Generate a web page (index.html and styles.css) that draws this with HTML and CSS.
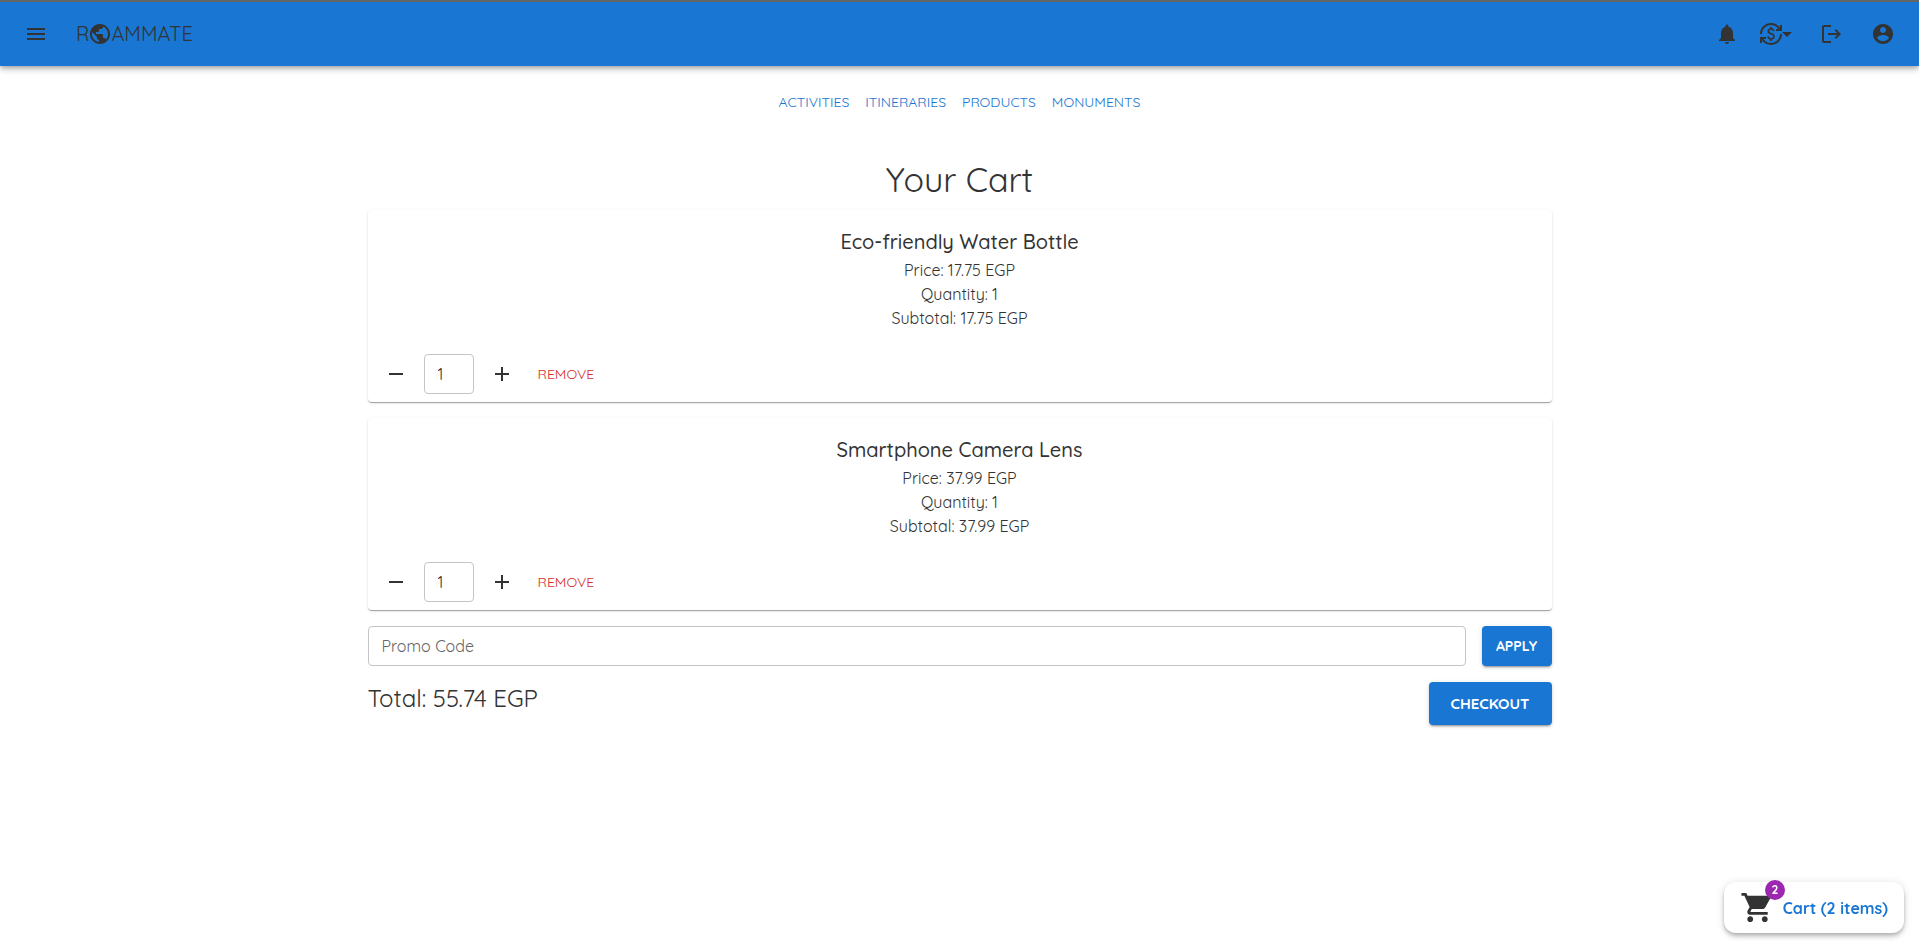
FILE: index.html
```html
<!DOCTYPE html>
<html lang="en">
<head>
<meta charset="utf-8">
<title>Roammate - Your Cart</title>
<link rel="stylesheet" href="styles.css">
</head>
<body>
<header class="app-bar">
  <button class="icon-button menu-button" aria-label="Menu"><svg class="icon" viewBox="0 0 24 24"><path d="M3 18h18v-2H3zm0-5h18v-2H3zm0-7v2h18V6z"/></svg></button>
  <a class="logo" href="#" aria-label="Roammate"><span>R</span><svg class="icon logo-globe" viewBox="0 0 24 24"><path d="M12 2C6.480 2 2 6.480 2 12s4.480 10 10 10 10-4.480 10-10S17.520 2 12 2m-1 17.930c-3.950-.49-7-3.850-7-7.930 0-.62.080-1.210.21-1.790L9 15v1c0 1.100.9 2 2 2zm6.900-2.540c-.26-.81-1-1.390-1.900-1.390h-1v-3c0-.55-.45-1-1-1H8v-2h2c.55 0 1-.45 1-1V7h2c1.100 0 2-.9 2-2v-.41c2.930 1.190 5 4.060 5 7.410 0 2.080-.8 3.970-2.100 5.390"/></svg><span>AMMATE</span></a>
  <div class="bar-actions">
    <button class="icon-button" aria-label="Notifications"><svg class="icon" viewBox="0 0 24 24"><path d="M12 22c1.100 0 2-.9 2-2h-4c0 1.100.89 2 2 2m6-6v-5c0-3.070-1.640-5.640-4.500-6.320V4c0-.83-.67-1.500-1.500-1.500s-1.500.67-1.500 1.500v.68C7.630 5.360 6 7.920 6 11v5l-2 2v1h16v-1z"/></svg></button>
    <button class="icon-button currency-button" aria-label="Currency"><svg class="icon" viewBox="0 0 24 24"><path d="M12.890 11.100c-1.780-.59-2.640-.96-2.640-1.900 0-1.020 1.110-1.390 1.810-1.390 1.310 0 1.790.99 1.900 1.340l1.580-.67c-.15-.44-.82-1.910-2.660-2.230V5h-1.750v1.260c-2.600.56-2.620 2.850-2.620 2.960 0 2.270 2.250 2.910 3.350 3.310 1.580.56 2.280 1.070 2.280 2.030 0 1.130-1.050 1.610-1.980 1.610-1.820 0-2.340-1.870-2.400-2.090l-1.660.67c.63 2.190 2.280 2.780 2.900 2.960V19h1.750v-1.240c.52-.09 3.020-.59 3.020-3.220.010-1.390-.6-2.610-2.880-3.440M3 21H1v-6h6v2H4.520c1.610 2.410 4.360 4 7.480 4 4.970 0 9-4.030 9-9h2c0 6.080-4.920 11-11 11-3.720 0-7.010-1.850-9-4.670zm-2-9C1 5.920 5.920 1 12 1c3.720 0 7.010 1.850 9 4.670V3h2v6h-6V7h2.480C17.870 4.590 15.120 3 12 3c-4.970 0-9 4.030-9 9z"/></svg><svg class="icon caret" viewBox="0 0 24 24"><path d="m7 10 5 5 5-5z"/></svg></button>
    <button class="icon-button" aria-label="Log out"><svg class="icon" viewBox="0 0 24 24"><path d="M5 5h7V3H5c-1.100 0-2 .9-2 2v14c0 1.100.9 2 2 2h7v-2H5zM17 7l-1.400 1.400 2.600 2.600H9v2h9.200l-2.600 2.600L17 17l5-5z"/></svg></button>
    <button class="icon-button account-button" aria-label="Account"><svg class="icon" viewBox="0 0 24 24"><path d="M12 2C6.480 2 2 6.480 2 12s4.480 10 10 10 10-4.480 10-10S17.520 2 12 2m0 3c1.660 0 3 1.340 3 3s-1.340 3-3 3-3-1.340-3-3 1.340-3 3-3m0 14.200c-2.500 0-4.710-1.280-6-3.220.030-1.990 4-3.080 6-3.080 1.990 0 5.970 1.090 6 3.080-1.290 1.940-3.500 3.220-6 3.220"/></svg></button>
  </div>
</header>
<nav class="sections">
  <a href="#">ACTIVITIES</a>
  <a href="#">ITINERARIES</a>
  <a href="#">PRODUCTS</a>
  <a href="#">MONUMENTS</a>
</nav>
<main class="cart">
  <h1 class="title">Your Cart</h1>
  <article class="card">
    <div class="card-content">
      <h2 class="product">Eco-friendly Water Bottle</h2>
      <p>Price: 17.75 EGP</p>
      <p>Quantity: 1</p>
      <p>Subtotal: 17.75 EGP</p>
    </div>
    <div class="card-actions">
      <button class="icon-button" aria-label="Decrease quantity"><svg class="icon" viewBox="0 0 24 24"><path d="M19 13H5v-2h14z"/></svg></button>
      <input class="field quantity" type="text" inputmode="numeric" value="1" aria-label="Quantity of Eco-friendly Water Bottle">
      <button class="icon-button" aria-label="Increase quantity"><svg class="icon" viewBox="0 0 24 24"><path d="M19 13h-6v6h-2v-6H5v-2h6V5h2v6h6z"/></svg></button>
      <button class="remove">REMOVE</button>
    </div>
  </article>
  <article class="card">
    <div class="card-content">
      <h2 class="product">Smartphone Camera Lens</h2>
      <p>Price: 37.99 EGP</p>
      <p>Quantity: 1</p>
      <p>Subtotal: 37.99 EGP</p>
    </div>
    <div class="card-actions">
      <button class="icon-button" aria-label="Decrease quantity"><svg class="icon" viewBox="0 0 24 24"><path d="M19 13H5v-2h14z"/></svg></button>
      <input class="field quantity" type="text" inputmode="numeric" value="1" aria-label="Quantity of Smartphone Camera Lens">
      <button class="icon-button" aria-label="Increase quantity"><svg class="icon" viewBox="0 0 24 24"><path d="M19 13h-6v6h-2v-6H5v-2h6V5h2v6h6z"/></svg></button>
      <button class="remove">REMOVE</button>
    </div>
  </article>
  <form class="row">
    <input class="field promo" type="text" placeholder="Promo Code" aria-label="Promo Code">
    <button class="filled" type="button">APPLY</button>
  </form>
  <div class="row summary">
    <p class="total">Total: 55.74 EGP</p>
    <button class="filled checkout">CHECKOUT</button>
  </div>
</main>
<a class="cart-chip" href="#">
  <span class="cart-icon"><svg viewBox="0 0 24 24"><path d="M7 18c-1.100 0-1.990.9-1.990 2S5.900 22 7 22s2-.9 2-2-.9-2-2-2M1 2v2h2l3.600 7.590-1.350 2.450c-.16.28-.25.61-.25.960 0 1.100.9 2 2 2h12v-2H7.420c-.14 0-.25-.11-.25-.25l.030-.12.900-1.630h7.450c.75 0 1.410-.41 1.750-1.030l3.580-6.490c.080-.14.120-.31.120-.480 0-.55-.45-1-1-1H5.210l-.94-2zm16 16c-1.100 0-1.990.9-1.990 2s.89 2 1.990 2 2-.9 2-2-.9-2-2-2"/></svg><span class="badge">2</span></span>
  <span>Cart (2 items)</span>
</a>
</body>
</html>
```
FILE: styles.css
```css
* { box-sizing: border-box; }

body {
  margin: 0;
  background: #fff;
  color: #333;
  font: 400 16px/24px Quicksand, Lato, sans-serif;
}

h1, h2, p { margin: 0; }
a { color: inherit; text-decoration: none; }
button, input { font-family: inherit; color: inherit; }
button { border: 0; background: none; padding: 0; cursor: pointer; }

.icon { display: block; width: 24px; height: 24px; flex: none; fill: currentColor; }
.icon-button {
  display: flex;
  align-items: center;
  justify-content: center;
  min-width: 40px;
  height: 40px;
}

.app-bar {
  display: flex;
  align-items: center;
  height: 66px;
  padding: 0 16px;
  border-top: 2px solid #666;
  background: #1976d2;
  box-shadow: 0 2px 4px -1px rgba(0, 0, 0, .2), 0 4px 5px rgba(0, 0, 0, .14), 0 1px 10px rgba(0, 0, 0, .12);
}
.logo {
  display: flex;
  align-items: center;
  margin-left: 20px;
  font-size: 20px;
  line-height: 32px;
}
.logo-globe { margin: 0 -1px; }
.bar-actions { display: flex; align-items: center; gap: 12px; margin-left: auto; }
.currency-button { justify-content: flex-start; min-width: 40px; }
.caret { margin-left: -8px; }
.account-button { margin-left: 0; }

.sections {
  display: flex;
  justify-content: center;
  gap: 16px;
  padding: 24px 16px;
  color: #1976d2;
  font-size: 14px;
}

.cart {
  display: flex;
  flex-direction: column;
  gap: 16px;
  max-width: 1216px;
  margin: 0 auto;
  padding: 20px 16px;
}
.title {
  margin-bottom: -8px;
  font-size: 34px;
  font-weight: 400;
  line-height: 44px;
  text-align: center;
}

.card {
  border-radius: 4px;
  box-shadow: 0 2px 1px -1px rgba(0, 0, 0, .2), 0 1px 1px rgba(0, 0, 0, .14), 0 1px 3px rgba(0, 0, 0, .12);
}
.card-content { padding: 16px; text-align: center; }
.product { font-size: 20px; font-weight: 500; line-height: 32px; }
.card-actions { display: flex; align-items: center; gap: 8px; padding: 8px; }

.field {
  height: 40px;
  padding: 0 13px;
  border: 1px solid #c4c4c4;
  border-radius: 4px;
  background: #fff;
  font-size: 16px;
}
.quantity { width: 50px; }
.remove { padding: 4px 8px; color: #d32f2f; font-size: 14px; line-height: 24px; }

.row { display: flex; gap: 16px; }
.promo { flex: 1; min-width: 0; }
.promo::placeholder { color: #666; opacity: 1; }
.filled {
  min-width: 70px;
  padding: 0 12px;
  border-radius: 4px;
  background: #1976d2;
  color: #fff;
  font-size: 14px;
  font-weight: 700;
  box-shadow: 0 3px 1px -2px rgba(0, 0, 0, .2), 0 2px 2px rgba(0, 0, 0, .14), 0 1px 5px rgba(0, 0, 0, .12);
}
.summary { justify-content: space-between; }
.total { font-size: 24px; line-height: 32px; }
.checkout { min-width: 123px; height: 43px; font-size: 15px; }

.cart-chip {
  position: fixed;
  right: 15px;
  bottom: 8px;
  display: flex;
  align-items: center;
  gap: 8px;
  padding: 8px 16px;
  border-radius: 12px;
  background: #fff;
  color: #1976d2;
  font-weight: 700;
  box-shadow: 0 2px 4px -1px rgba(0, 0, 0, .2), 0 4px 5px rgba(0, 0, 0, .14), 0 1px 10px rgba(0, 0, 0, .12);
}
.cart-icon { position: relative; width: 35px; height: 35px; }
.cart-icon svg { display: block; fill: #333; }
.badge {
  position: absolute;
  top: -10px;
  right: -10px;
  width: 20px;
  height: 20px;
  border-radius: 10px;
  background: #9c27b0;
  color: #fff;
  font-size: 12px;
  line-height: 20px;
  text-align: center;
}
```
